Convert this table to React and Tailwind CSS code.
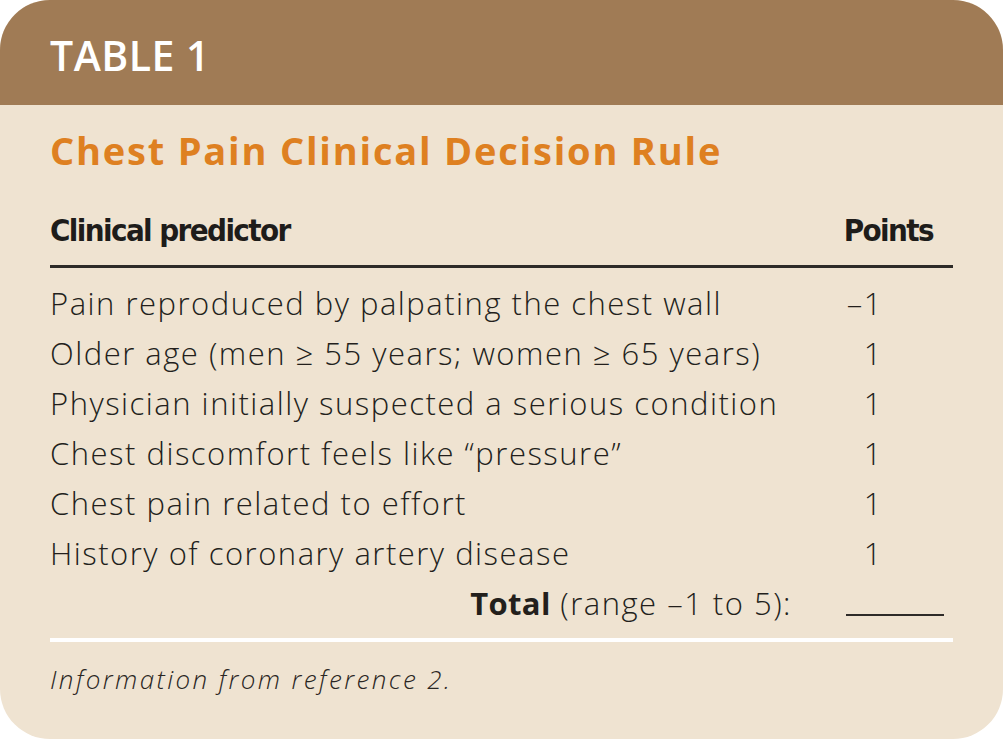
import React from 'react';

const rows = [
    { label: 'Pain reproduced by palpating the chest wall', points: '\u20131' },
    { label: 'Older age (men \u2265 55 years; women \u2265 65 years)', points: '1' },
    { label: 'Physician initially suspected a serious condition', points: '1' },
    { label: 'Chest discomfort feels like \u201cpressure\u201d', points: '1' },
    { label: 'Chest pain related to effort', points: '1' },
    { label: 'History of coronary artery disease', points: '1' },
];

const App = () => {
    return (
        <div className="w-[1003px] h-[740px] bg-white">
            <div className="w-[1003px] h-[739px] rounded-[50px] overflow-hidden bg-[#efe3d1] flex flex-col" style={{ fontFamily: '"Open Sans", sans-serif' }}>
                {/* Header band */}
                <div className="h-[105px] bg-[#a07b55] flex items-center pl-[50px] pt-[6px]">
                    <h1 className="text-white text-[41px] font-semibold tracking-[0.5px]">TABLE 1</h1>
                </div>

                <div className="px-[50px] pt-[20px]">
                    <h2 className="text-[#de8021] text-[38px] font-bold leading-[50px] tracking-[1.8px]">Chest Pain Clinical Decision Rule</h2>

                    {/* Column headings */}
                    <div className="flex justify-between items-end mt-[37px] pb-[17px] border-b-[3px] border-[#2e2b28] text-[#1e1c1a] text-[31px] font-bold leading-[36px] tracking-[-1.6px]" style={{ fontFamily: '"DejaVu Sans Condensed", "DejaVu Sans", sans-serif' }}>
                        <span>Clinical predictor</span>
                        <span className="pr-[20px]">Points</span>
                    </div>

                    {/* Rows */}
                    <div className="pt-[10px] text-[#231f1c] text-[31px] font-light tracking-[1.5px]">
                        {rows.map((row) => (
                            <div key={row.label} className="flex justify-between h-[50px] items-center">
                                <span>{row.label}</span>
                                <span className="w-[110px] text-right pr-[70px]">{row.points}</span>
                            </div>
                        ))}
                        <div className="flex justify-end h-[50px] items-center">
                            <span><b className="font-bold tracking-[0.3px]">Total</b> (range {'\u2013'}1 to 5):</span>
                            <span className="ml-[54px] mr-[9px] w-[98px] h-[26px] border-b-[2px] border-[#2e2b28]"></span>
                        </div>
                    </div>

                    <div className="h-[4px] bg-white mt-[10px]"></div>

                    <p className="mt-[18px] text-[#2a2623] text-[26px] italic font-light tracking-[2.4px]">Information from reference 2.</p>
                </div>
            </div>
        </div>
    );
};

export default App;
